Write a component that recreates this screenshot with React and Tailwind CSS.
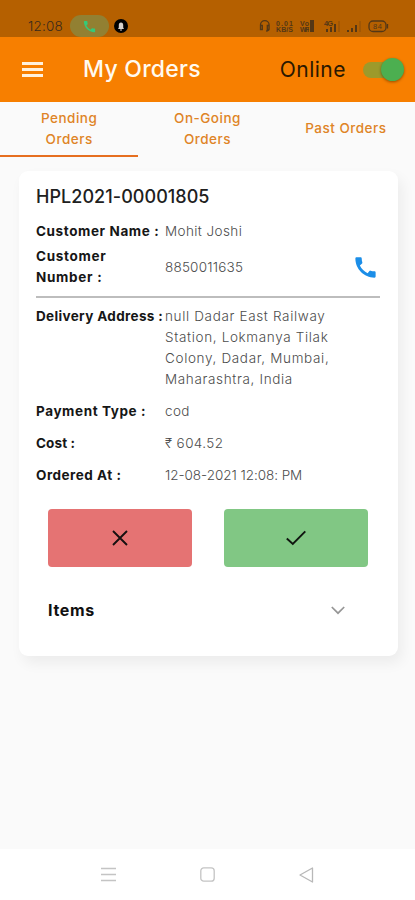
import React from "react";
import { MdCall } from "react-icons/md";

function StatusIcons() {
  return (
    <svg width="134" height="16" viewBox="0 0 134 16" fill="none" stroke="#543716" strokeWidth="1.3">
      <path d="M2.500 10V7a4.300 4.300 0 0 1 8.600 0v3.500q0 2.500-3 2.500M2.500 7.500h1.800v4H2.500zM11 7.500H9.300v4H11z" />
      <g fill="#543716" stroke="none" fontFamily="Liberation Sans, sans-serif" fontWeight="700">
        <text x="18" y="7.5" fontSize="7" textLength="17">0.01</text>
        <text x="18" y="14" fontSize="7" textLength="17">KB/S</text>
        <text x="42" y="7.5" fontSize="7" textLength="9">Vo</text>
        <text x="42" y="14" fontSize="7" textLength="9">WiFi</text>
        <path d="M52 2h4v12h-4z" />
        <text x="66" y="8" fontSize="7.5" textLength="9">4G</text>
        <path d="M68 11h2v3h-2zM72 9h2v5h-2zM76 6h2v8h-2zM89 12h2v2h-2zM93 10h2v4h-2zM97 7h2v7h-2z" />
        <path d="M80.500 3h1v11h-1zM101.500 3h1v11h-1z" opacity=".4" />
        <text x="115" y="11" fontSize="7.500" fontWeight="400" textLength="9">84</text>
      </g>
      <rect x="111" y="3" width="17" height="10.500" rx="4" />
      <path d="M129.500 6v4.500" />
    </svg>
  );
}

function Row({ label, labelClass = "tracking-[0.6px]", children, valueClass = "tracking-[0.4px]", className }) {
  return (
    <div className={`flex leading-[21px] ${className}`}>
      <div className={`w-[129px] shrink-0 whitespace-nowrap text-[13.5px] font-bold text-[#161616] ${labelClass}`}>{label}</div>
      <div className={`whitespace-nowrap text-[13.5px] font-light text-[#4c4c4c] ${valueClass}`}>{children}</div>
    </div>
  );
}

export default function App() {
  return (
    <div className="flex h-[900px] w-[415px] flex-col overflow-hidden bg-[#fafafa] font-['Inter','Noto_Sans',sans-serif]">
      <div className="flex h-[37px] shrink-0 items-end justify-between bg-[#b56000] pl-7 pr-[23px]">
        <div className="flex h-[22px] items-center">
          <span className="w-[42px] text-[13.5px] font-light tracking-[0.2px] text-[#3a2a1c]">12:08</span>
          <span className="flex h-[22px] w-[39px] items-center justify-center rounded-full bg-[#928032]">
            <MdCall className="text-[#35c978]" size={15} />
          </span>
          <span className="ml-[5px] flex size-[14px] items-center justify-center rounded-full bg-black">
            <svg width="8" height="9" viewBox="0 0 8 9" fill="#d5d0cc"><path d="M4 0.500C5.500 0.500 6.200 1.600 6.200 3v2.500L7 7H1l.8-1.500V3C1.800 1.600 2.500.5 4 .5zM3 7.500h2v1H3z" /></svg>
          </span>
        </div>
        <div className="flex h-[22px] items-center">
          <StatusIcons />
        </div>
      </div>

      <header className="flex h-[65px] shrink-0 items-center bg-[#f77f00] pl-[22px] pr-[11px]">
        <div className="flex w-[21px] flex-col gap-[3px]">
          <span className="h-[3px] bg-[#fff1dd]" />
          <span className="h-[3px] bg-[#fff1dd]" />
          <span className="h-[3px] bg-[#fff1dd]" />
        </div>
        <h1 className="ml-[40px] whitespace-nowrap text-[23px] font-medium tracking-[0.25px] text-[#fffaf0]">My Orders</h1>
        <span className="ml-auto text-[21px] tracking-[0.5px] text-[#2a1800]">Online</span>
        <div className="ml-[17px] flex h-4 w-[41px] items-center justify-end rounded-full bg-[#9d9a2b]">
          <span className="size-[23px] shrink-0 rounded-full bg-[#4caf50] shadow-[0_1px_3px_rgba(0,0,0,0.4)]" />
        </div>
      </header>

      <nav className="grid h-[55px] shrink-0 grid-cols-3 text-center text-[13.5px] font-medium leading-[21px] tracking-[0.5px] text-[#df8426]">
        <div className="flex items-center justify-center border-b-2 border-[#e66f20]"><span>Pending<br />Orders</span></div>
        <div className="flex items-center justify-center border-b-2 border-transparent"><span>On-Going<br />Orders</span></div>
        <div className="flex items-center justify-center border-b-2 border-transparent"><span>Past Orders</span></div>
      </nav>

      <main className="ml-[19px] mt-[14px] flex h-[485px] w-[379px] shrink-0 flex-col rounded-[9px] bg-white pl-[17px] pr-[18px] pt-[14px] shadow-[4px_7px_14px_rgba(0,0,0,0.06)]">
        <h2 className="whitespace-nowrap text-[18px] font-medium leading-6 tracking-[0.05px] text-[#202020]">HPL2021-00001805</h2>
        <Row label="Customer Name :" className="mt-[12px]">Mohit Joshi</Row>
        <div className="mt-[4px] flex items-center">
          <div className="w-[129px] text-[13.5px] font-bold leading-[21px] tracking-[0.7px] text-[#161616]">Customer<br />Number :</div>
          <div className="text-[13.5px] font-light tracking-[0.2px] text-[#4c4c4c]">8850011635</div>
          <MdCall className="ml-auto mr-px text-[#1b8ee8]" size={27} />
        </div>
        <div className="mt-[8px] h-[2px] shrink-0 bg-[#bdbdbd]" />
        <Row label="Delivery Address :" labelClass="tracking-[0.35px]" valueClass="tracking-[0.65px]" className="mt-[8px]">
          null Dadar East Railway<br />Station, Lokmanya Tilak<br />Colony, Dadar, Mumbai,<br />Maharashtra, India
        </Row>
        <Row label="Payment Type :" className="mt-[11px]">cod</Row>
        <Row label="Cost :" labelClass="tracking-[0.1px]" className="mt-[11px]">₹ 604.52</Row>
        <Row label="Ordered At :" labelClass="tracking-[0.5px]" valueClass="tracking-[-0.05px]" className="mt-[11px]">12-08-2021 12:08: PM</Row>
        <div className="mt-[23px] flex gap-8 px-3">
          <button className="flex h-[58px] w-36 items-center justify-center rounded-[4px] bg-[#e57373]">
            <svg width="16" height="16" viewBox="0 0 16 16" stroke="#161010" strokeWidth="1.9"><path d="M1 1l14 14M15 1L1 15" /></svg>
          </button>
          <button className="flex h-[58px] w-36 items-center justify-center rounded-[4px] bg-[#81c784]">
            <svg width="20" height="16" viewBox="0 0 20 16" fill="none" stroke="#101610" strokeWidth="1.9"><path d="M.8 8.500l6 5.500L19.300 1.300" /></svg>
          </button>
        </div>
        <div className="mt-[31px] flex items-center justify-between pl-3 pr-[35px]">
          <span className="text-[16px] font-bold leading-6 tracking-[0.7px] text-[#111]">Items</span>
          <svg width="14" height="9" viewBox="0 0 14 9" fill="none" stroke="#969696" strokeWidth="1.7"><path d="M.8 1l6.200 6.200L13.200 1" /></svg>
        </div>
      </main>

      <footer className="mt-auto flex h-[51px] shrink-0 items-center justify-center gap-[84px] bg-white">
        <svg width="15" height="15" viewBox="0 0 15 15" stroke="#c4c4c4" strokeWidth="1.300"><path d="M0 1.500h15M0 7.500h15M0 13.500h15" /></svg>
        <svg width="15" height="15" viewBox="0 0 15 15" fill="none" stroke="#c4c4c4" strokeWidth="1.300"><rect x=".8" y=".8" width="13.400" height="13.400" rx="3" /></svg>
        <svg width="15" height="16" viewBox="0 0 15 16" fill="none" stroke="#b8b8b8" strokeWidth="1.300" strokeLinejoin="round"><path d="M13.500 1v14L1 8z" /></svg>
      </footer>
    </div>
  );
}
